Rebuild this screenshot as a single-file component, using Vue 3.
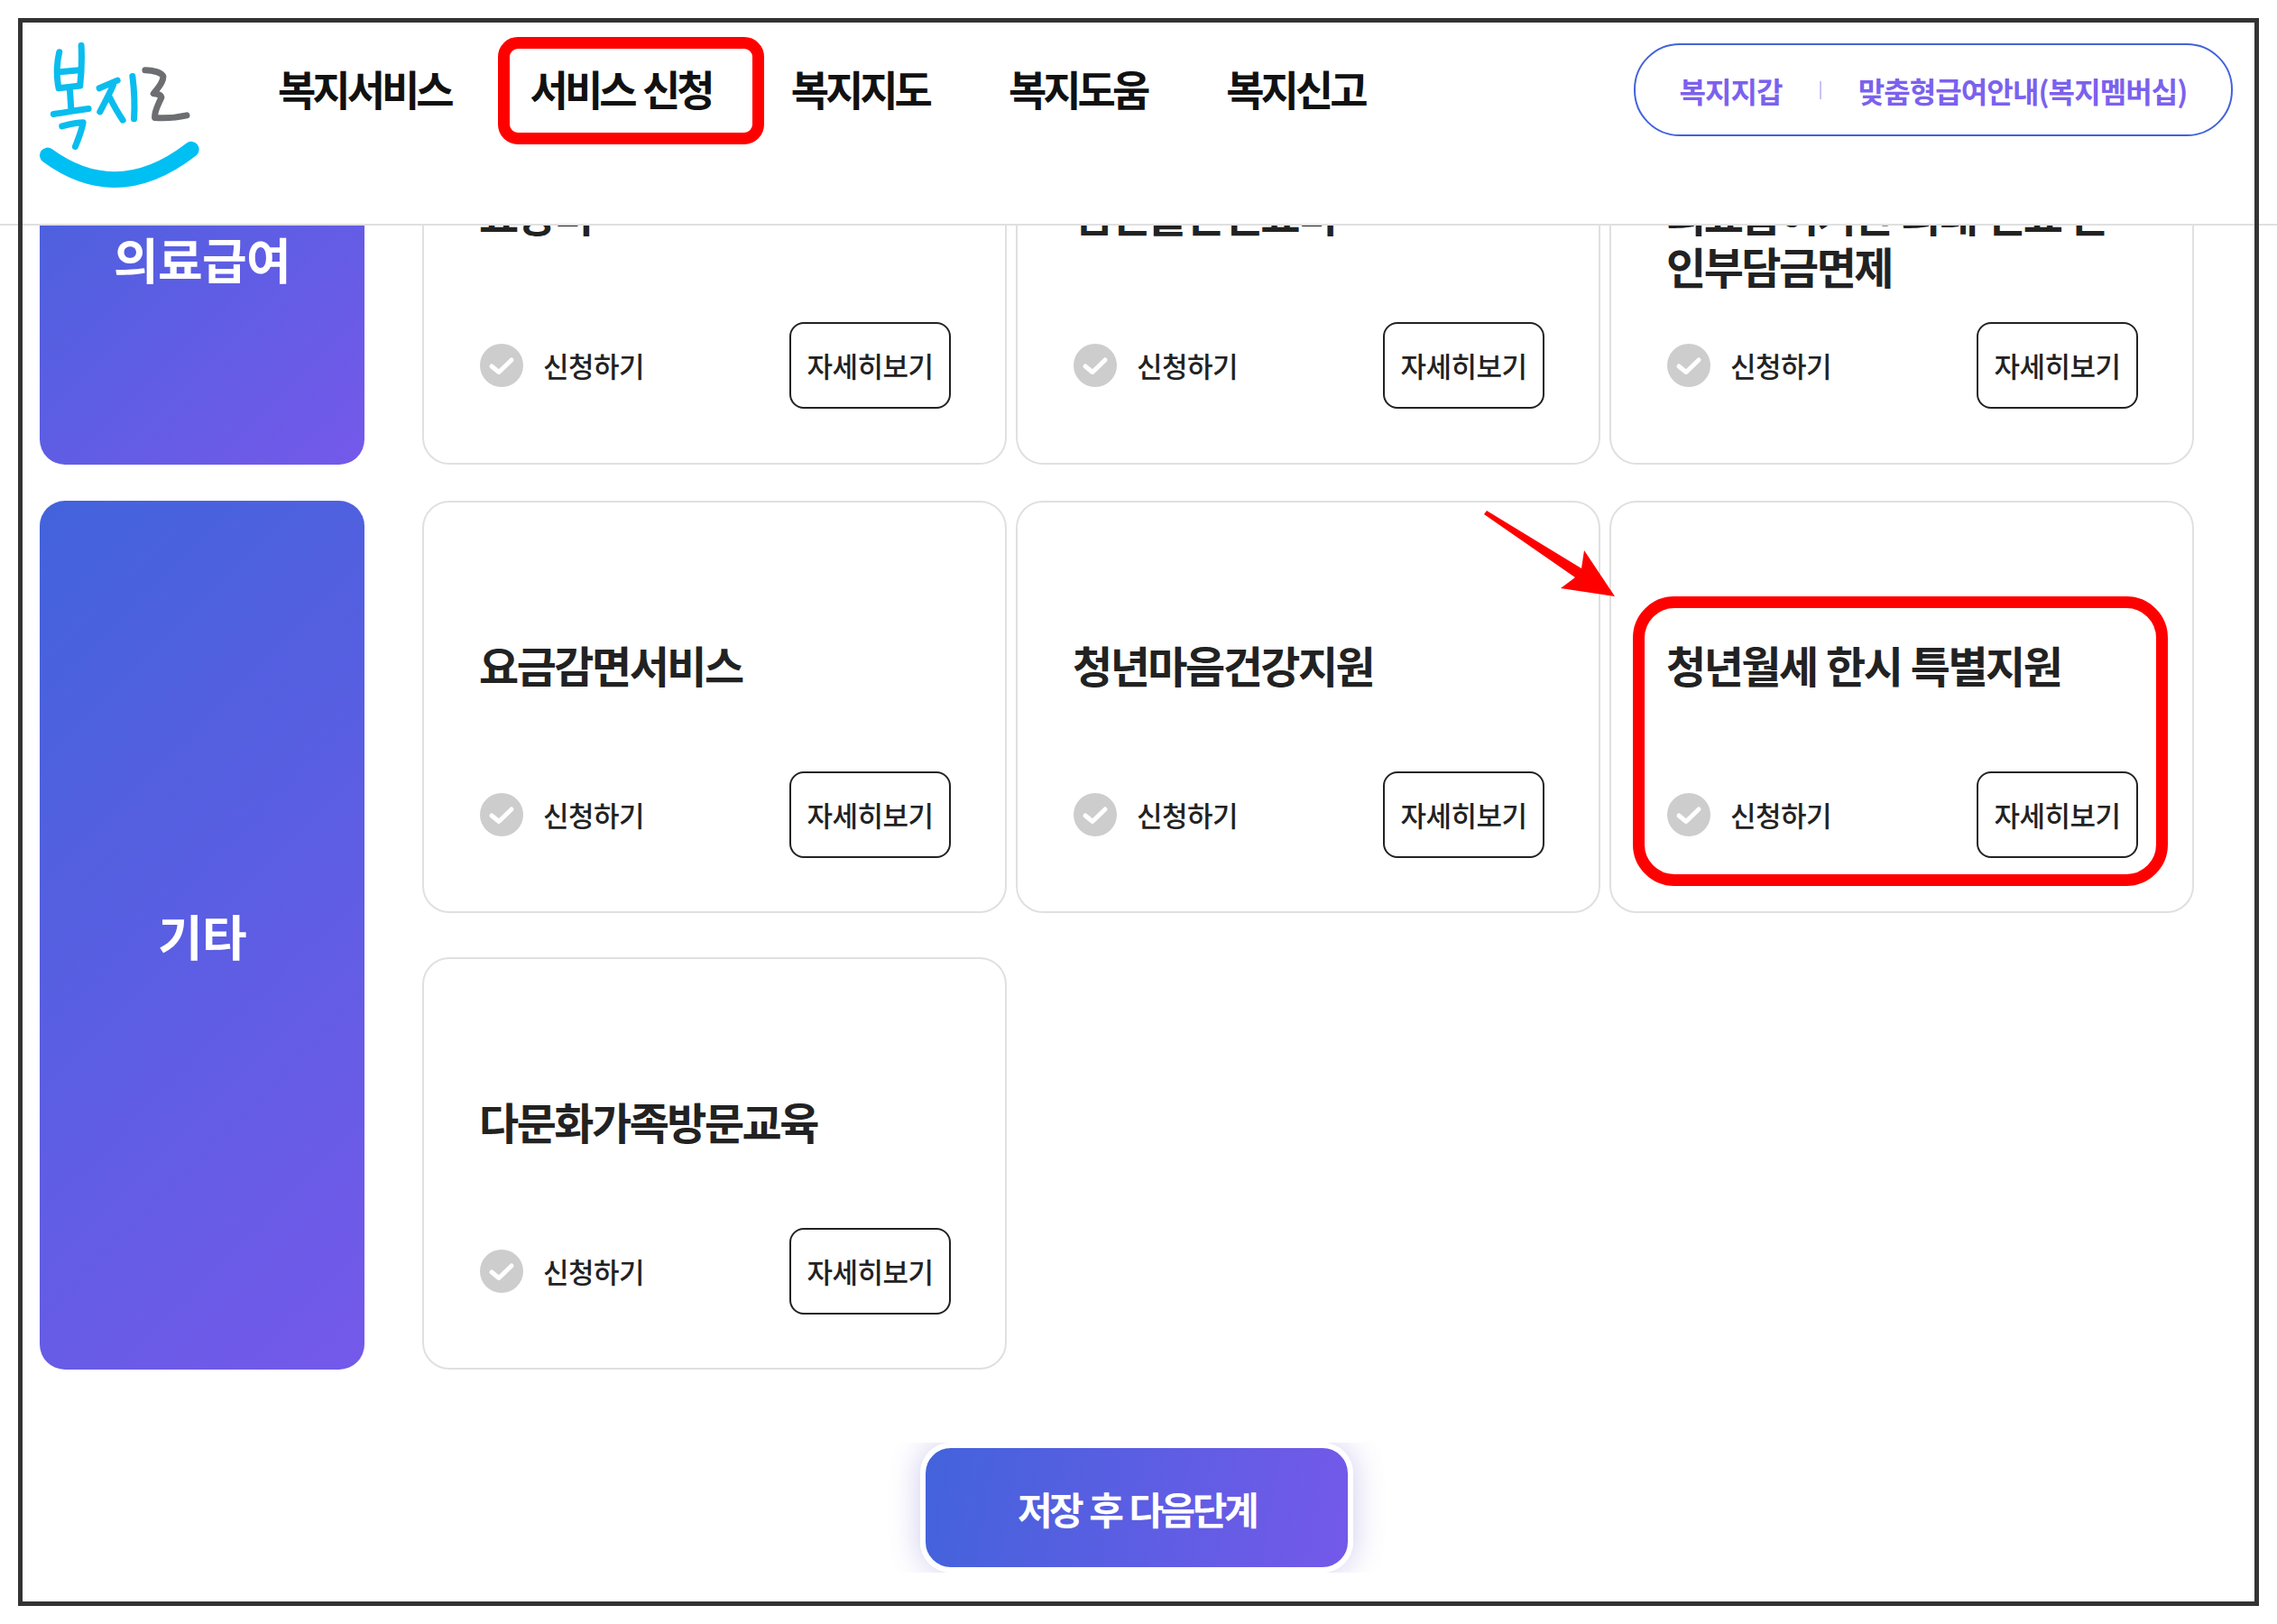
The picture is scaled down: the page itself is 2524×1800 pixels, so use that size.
<template>
  <div class="page">
    <div class="frame">
      <header class="top">
        <svg class="logo" viewBox="60 80 560 500" fill="none" stroke-linecap="round" stroke-linejoin="round">
          <g stroke="#0abdee" stroke-width="21">
            <path d="M137 112C128 150 128 190 133 222" />
            <path d="M210 90C212 130 212 170 206 222" />
            <path d="M137 178L204 172" />
            <path d="M135 232L206 224" />
            <path d="M172 238L176 296" />
            <path d="M118 318C160 312 200 304 234 300" />
            <path d="M146 358C170 352 195 346 216 346C212 372 200 400 190 426" />
            <path d="M270 232L330 206" />
            <path d="M316 222C302 254 286 284 272 310" />
            <path d="M304 262C318 290 334 318 348 338" />
            <path d="M380 192C386 240 388 290 385 334" />
          </g>
          <path d="M422 172C448 172 478 180 482 194C482 216 462 234 450 250C462 250 474 254 476 262C466 286 452 308 454 330C488 332 526 330 560 322" stroke="#6d6e71" stroke-width="21" />
          <path d="M98 455Q330 625 575 435" stroke="#00bff3" stroke-width="52" />
        </svg>
        <nav class="menu">
          <a v-for="item in menu" :key="item">{{ item }}</a>
        </nav>
        <div class="quick">
          <a>복지지갑</a>
          <i></i>
          <a>맞춤형급여안내(복지멤버십)</a>
        </div>
      </header>

      <div class="content">
        <section v-for="group in groups" :key="group.name" class="group">
          <div class="tile">{{ group.name }}</div>
          <div class="cards">
            <div v-for="card in group.cards" :key="card" class="card">
              <h3>{{ card }}</h3>
              <div class="actions">
                <label class="check">
                  <svg viewBox="0 0 48 48">
                    <circle cx="24" cy="24" r="24" fill="#cdcdcd" />
                    <path d="M13 25L21 31.5L35 18" fill="none" stroke="#fff" stroke-width="5" stroke-linecap="round" stroke-linejoin="round" />
                  </svg>
                  <span>신청하기</span>
                </label>
                <button class="more">자세히보기</button>
              </div>
            </div>
          </div>
        </section>

        <div class="save-wrap">
          <button class="save">저장 후 다음단계</button>
        </div>
      </div>

      <!-- 빨간 표시 -->
      <div class="mark mark-menu"></div>
      <div class="mark mark-card"></div>
      <svg class="arrow" viewBox="0 0 150 100">
        <polygon points="0,4 3,0 108,64 111,44 145,95 85,86 101,74" fill="#f00" />
      </svg>
    </div>
  </div>
</template>

<script setup>
const menu = ['복지서비스', '서비스 신청', '복지지도', '복지도움', '복지신고']

const groups = [
  {
    name: '의료급여',
    cards: ['요양비', '임신출산진료비', '의료급여기관 외래 진료 본\n인부담금면제']
  },
  {
    name: '기타',
    cards: ['요금감면서비스', '청년마음건강지원', '청년월세 한시 특별지원', '다문화가족방문교육']
  }
]
</script>

<style>
html,
body {
  margin: 0;
  background: #fff;
}
</style>

<style scoped>
.page {
  position: relative;
  box-sizing: border-box;
  height: 1800px;
  padding: 20px;
  font-family: "Noto Sans CJK KR", "Noto Sans", sans-serif;
  color: #222;
}

/* 헤더 선은 프레임 밖까지 이어진다 */
.page::before {
  content: '';
  position: absolute;
  left: 0;
  right: 0;
  top: 248px;
  height: 2px;
  background: #e0e0e0;
}

.frame {
  position: relative;
  box-sizing: border-box;
  height: 1760px;
  border: 5px solid #333;
  background: #fff;
  overflow: hidden;
}

.top {
  position: absolute;
  top: 0;
  left: 0;
  right: 0;
  z-index: 2;
  box-sizing: border-box;
  height: 225px;
  display: flex;
  align-items: flex-start;
  padding: 22px 24px 0 15px;
  background: #fff;
  border-bottom: 2px solid #e0e0e0;
}

.logo {
  width: 187px;
  height: 167px;
  flex: none;
}

.menu {
  display: flex;
  gap: 88px;
  margin: 18px 0 0 81px;
  font-size: 46px;
  font-weight: 700;
  line-height: 64px;
  letter-spacing: -4px;
  word-spacing: 3px;
  color: #111;
  white-space: nowrap;
}

.quick {
  box-sizing: border-box;
  width: 664px;
  height: 103px;
  margin: 1px 0 0 auto;
  display: flex;
  align-items: center;
  justify-content: center;
  gap: 41px;
  border: 2px solid #4263db;
  border-radius: 51px;
  font-size: 32px;
  font-weight: 700;
  letter-spacing: -0.9px;
  color: #7b61ee;
}

.quick i {
  width: 2px;
  height: 20px;
  background: #c9c3f5;
}

.content {
  padding: 33px 0 0 19px;
}

.group {
  display: flex;
  gap: 64px;
  margin-bottom: 40px;
}

.tile {
  flex: none;
  width: 360px;
  display: flex;
  align-items: center;
  justify-content: center;
  border-radius: 28px;
  background: linear-gradient(135deg, #4263db, #7559ea);
  color: #fff;
  font-size: 54px;
  font-weight: 700;
  letter-spacing: -0.7px;
}

.cards {
  display: grid;
  grid-template-columns: repeat(3, 648px);
  column-gap: 10px;
  row-gap: 49px;
}

.card {
  box-sizing: border-box;
  height: 457px;
  padding: 150px 60px 59px 62px;
  display: flex;
  flex-direction: column;
  justify-content: space-between;
  border: 2px solid #e0e0e0;
  border-radius: 30px;
  background: #fff;
}

.group:first-of-type .card {
  padding-top: 147px;
  padding-bottom: 60px;
}

.card h3 {
  margin: 0 0 0 -1px;
  font-size: 48px;
  font-weight: 700;
  line-height: 58px;
  letter-spacing: -2.5px;
  word-spacing: 2px;
  color: #222;
  white-space: pre-line;
}

.actions {
  display: flex;
  align-items: center;
  justify-content: space-between;
}

.check {
  display: flex;
  align-items: center;
  gap: 22px;
  font-size: 31px;
  font-weight: 500;
  letter-spacing: -0.5px;
}

.check span {
  padding-bottom: 2px;
}

.check svg {
  width: 48px;
  height: 48px;
}

.more {
  box-sizing: border-box;
  width: 179px;
  height: 96px;
  padding: 0 0 2px;
  border: 2px solid #222;
  border-radius: 16px;
  background: #fff;
  color: #222;
  font-family: inherit;
  font-size: 31px;
  font-weight: 500;
  letter-spacing: -0.5px;
}

.save-wrap {
  width: 640px;
  height: 144px;
  margin: 81px 0 0 896px;
  overflow: hidden;
  display: flex;
  justify-content: center;
}

.save {
  box-sizing: border-box;
  width: 480px;
  height: 144px;
  border: 6px solid #fff;
  border-radius: 34px;
  background: linear-gradient(100deg, #4263db, #7559ea) border-box;
  box-shadow: 0 0 34px rgba(90, 80, 200, 0.3);
  color: #fff;
  font-family: inherit;
  font-size: 42px;
  font-weight: 700;
  letter-spacing: -3.5px;
  word-spacing: 3px;
}

.mark {
  position: absolute;
  z-index: 3;
  box-sizing: border-box;
  border: 13px solid #f00;
}

.mark-menu {
  left: 527px;
  top: 16px;
  width: 295px;
  height: 119px;
  border-radius: 22px;
}

.mark-card {
  left: 1785px;
  top: 636px;
  width: 593px;
  height: 321px;
  border-radius: 46px;
}

.arrow {
  position: absolute;
  z-index: 3;
  left: 1620px;
  top: 541px;
  width: 150px;
  height: 100px;
}
</style>
